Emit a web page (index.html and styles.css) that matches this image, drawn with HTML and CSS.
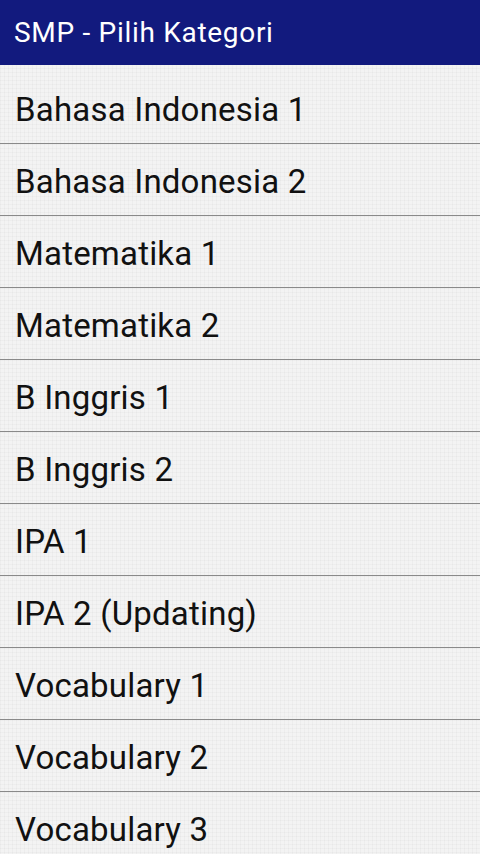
FILE: index.html
```html
<!DOCTYPE html>
<html>
<head>
<meta charset="utf-8">
<link rel="stylesheet" href="styles.css">
</head>
<body>
<header class="appbar"><span class="title">SMP - Pilih Kategori</span></header>
<ul class="list">
<li class="item">Bahasa Indonesia 1</li>
<li class="item">Bahasa Indonesia 2</li>
<li class="item">Matematika 1</li>
<li class="item">Matematika 2</li>
<li class="item">B Inggris 1</li>
<li class="item">B Inggris 2</li>
<li class="item">IPA 1</li>
<li class="item">IPA 2 (Updating)</li>
<li class="item">Vocabulary 1</li>
<li class="item">Vocabulary 2</li>
<li class="item">Vocabulary 3</li>
</ul>
</body>
</html>
```
FILE: styles.css
```css
html, body {
  margin: 0;
  padding: 0;
}
body {
  width: 480px;
  height: 854px;
  overflow: hidden;
  font-family: Roboto, "Noto Sans", sans-serif;
  background-color: #f3f3f3;
  background-image:
    repeating-linear-gradient(to right, rgba(0,0,0,0.025) 0 1px, transparent 1px 4px),
    repeating-linear-gradient(to bottom, rgba(0,0,0,0.025) 0 1px, transparent 1px 4px);
}
.appbar {
  height: 65px;
  background: #121a7e;
  display: flex;
  align-items: center;
  padding-left: 14px;
  box-sizing: border-box;
}
.title {
  color: #ffffff;
  font-size: 28px;
  letter-spacing: 0.7px;
  padding-bottom: 1px;
}
.list {
  list-style: none;
  margin: 0;
  padding: 7px 0 0 0;
}
.item {
  height: 68px;
  box-sizing: content-box;
  border-bottom: 1px solid #8a8a8a;
  display: flex;
  align-items: center;
  padding: 3px 0 0 15px;
  font-size: 33px;
  line-height: 1;
  letter-spacing: 0.2px;
  color: #111111;
}
```
